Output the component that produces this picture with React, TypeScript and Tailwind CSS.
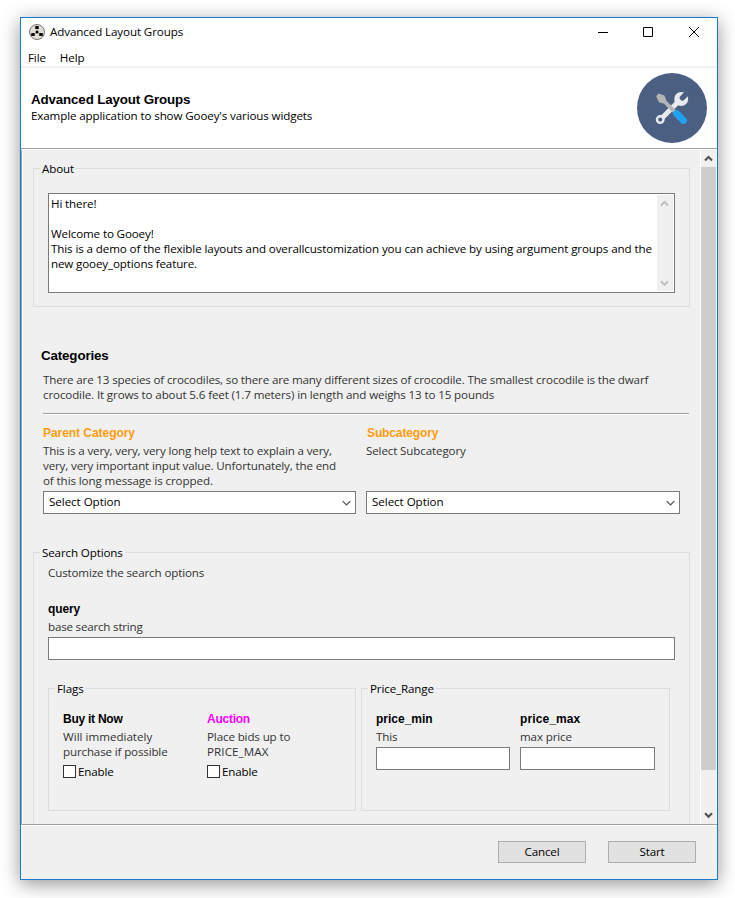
import type { ReactNode } from "react";

const ui = "font-['Open_Sans','Noto_Sans',sans-serif] text-[11.6px] leading-[15px] whitespace-nowrap tracking-[-0.13px]";
const heading = "font-['Liberation_Sans',Arial,sans-serif] font-bold text-[13.33px] tracking-[-0.13px] text-black";

function Line({ children, track = "", className = "" }: { children?: ReactNode; track?: string; className?: string }) {
  return (
    <div className={`h-[15px] ${className}`}>
      <span className={track}>{children}</span>
    </div>
  );
}

function Label({ children, className = "text-black", track = "tracking-[-0.12px]" }: { children: ReactNode; className?: string; track?: string }) {
  return (
    <div className={`mb-[2px] h-[16px] pt-px font-['Liberation_Sans',Arial,sans-serif] text-[12px] font-bold ${track} ${className}`}>
      {children}
    </div>
  );
}

function Group({ title, className, children }: { title: string; className: string; children: ReactNode }) {
  return (
    <section className={`flex flex-col border border-[#dcdcdc] ${className}`}>
      <div className="-mt-[8px] ml-[6px] h-[15px] self-start bg-[#f0f0f0] px-[2px] text-black">{title}</div>
      {children}
    </section>
  );
}

function ScrollArrow({ down = false, color }: { down?: boolean; color: string }) {
  return (
    <svg width="9" height="7" viewBox="0 0 9 7" fill="none" stroke={color} strokeWidth="2">
      <path d={down ? "M1 1.3 4.5 4.8 8 1.3" : "M1 5.5 4.5 2 8 5.5"} />
    </svg>
  );
}

function Combo({ className }: { className: string }) {
  return (
    <div className={`flex h-[23px] items-start justify-between border border-[#7a7a7a] bg-white pt-[2px] pr-[4px] pl-[5px] text-black ${className}`}>
      <span className="tracking-[-0.05px]">Select Option</span>
      <svg className="mt-[6px]" width="9" height="7" viewBox="0 0 9 7" fill="none" stroke="#505050" strokeWidth="1.2">
        <path d="M.7 1.2 4.5 5 8.3 1.2" />
      </svg>
    </div>
  );
}

function Check() {
  return (
    <div className="mt-[5px] flex h-[15px] text-black">
      <span className="mt-px h-[13px] w-[13px] border border-[#333] bg-white" />
      <span className="ml-[2px]">Enable</span>
    </div>
  );
}

function AppIcon() {
  return (
    <svg width="16" height="16" viewBox="0 0 16 16">
      <circle cx="8" cy="8" r="7.5" fill="#e0dfd6" stroke="#77756f" strokeWidth="1" />
      <path d="M8 8V4M8 8 4 10.400M8 8l4 2.400" stroke="#a5a49c" strokeWidth="1" />
      <circle cx="8" cy="8" r="1.500" fill="#000" />
      <rect x="6.200" y="2" width="3.600" height="3" rx=".4" fill="#0a0a0a" />
      <rect x="2.200" y="9" width="3.600" height="3" rx=".6" fill="#0a0a0a" />
      <rect x="10.200" y="9" width="3.600" height="3" rx=".6" fill="#0a0a0a" />
    </svg>
  );
}

function ToolsLogo() {
  return (
    <svg width="70" height="70" viewBox="0 0 70 70">
      <circle cx="35" cy="35" r="35" fill="#4b5f83" />
      <path d="M24.500 45.500 41 29" stroke="#e8eaec" strokeWidth="5" />
      <circle cx="23.200" cy="46.600" r="3.300" fill="#4b5f83" stroke="#e8eaec" strokeWidth="2.400" />
      <circle cx="44.200" cy="26" r="7" fill="#e8eaec" />
      <path d="M45.400 24.800 52 18.200" stroke="#4b5f83" strokeWidth="5.400" strokeLinecap="round" />
      <path d="M19.200 23.200 21.500 20.500 27.500 22.500 29.600 28 39.300 37.400 36.500 40.200 27 30.800 21.800 29.200Z" fill="#b5b5b5" />
      <path d="m39.500 40.500 7 7" stroke="#21a1f1" strokeWidth="6.800" strokeLinecap="round" />
      <path d="M36.200 39.700 39.200 36.800 44 40.500 40 44.600Z" fill="#21a1f1" />
    </svg>
  );
}

export default function App() {
  return (
    <div className={`h-[898px] w-[735px] overflow-hidden bg-white pt-[17px] pl-[20px] text-black ${ui}`}>
      <div className="flex h-[863px] w-[698px] flex-col border border-[#1979ca] bg-[#f0f0f0] shadow-[0_4px_18px_rgba(0,0,0,0.42)]">
        <header className="flex h-[29px] shrink-0 items-start bg-white pl-[8px]">
          <div className="mt-[6px]"><AppIcon /></div>
          <span className="mt-[6px] ml-[5px] tracking-[-0.1px]">Advanced Layout Groups</span>
          <svg className="mt-[8px] mr-[16px] ml-auto" width="103" height="12" viewBox="0 0 103 12" fill="none" stroke="#000">
            <path d="M0 6.500h10M45.500 1.500h9v9h-9ZM91 1l10 10M101 1 91 11" />
          </svg>
        </header>
        <nav className="flex h-[19px] shrink-0 gap-[14px] bg-white pt-[3px] pl-[7px]">
          <span>File</span>
          <span>Help</span>
        </nav>
        <div className="flex h-[82px] shrink-0 justify-between border-t-2 border-[#f0f0f0] bg-white pr-[10px] pl-[10px]">
          <div className="pt-[24px]">
            <Line className={heading}>Advanced Layout Groups</Line>
            <Line className="mt-px" track="tracking-[-0.12px]">Example application to show Gooey's various widgets</Line>
          </div>
          <div className="pt-[5px]"><ToolsLogo /></div>
        </div>
        <div className="h-[2px] shrink-0 border-t border-[#a0a0a0] bg-white" />

        <div className="flex h-[674px] shrink-0 overflow-hidden border-l border-[#a0a0a0]">
          <main className="h-[674px] w-[679px] shrink-0 overflow-hidden border-x border-white pt-[18px] pl-[10px] text-[#333]">
            <Group title="About" className="h-[139px] w-[657px]">
              <div className="mt-[17px] ml-[14px] flex h-[100px] w-[627px] justify-between border border-[#7a7a7a] bg-white text-black">
                <div className="w-[606px] pt-[2px] pl-[2px]">
                  <Line>Hi there!</Line>
                  <Line />
                  <Line>Welcome to Gooey!</Line>
                  <Line track="tracking-[-0.105px]">This is a demo of the flexible layouts and overallcustomization you can achieve by using argument groups and the</Line>
                  <Line>new gooey_options feature.</Line>
                </div>
                <div className="mt-px mr-px flex h-[96px] w-[16px] shrink-0 flex-col items-start justify-between bg-[#f0f0f0] pt-[5px] pb-[4px] pl-[3px]">
                  <ScrollArrow color="#bfbfbf" />
                  <ScrollArrow down color="#bfbfbf" />
                </div>
              </div>
            </Group>

            <section className="mt-[41px] ml-[8px]">
              <Line className={heading}>Categories</Line>
              <div className="mt-[9px] ml-[2px]">
                <Line track="tracking-[-0.16px]">There are 13 species of crocodiles, so there are many different sizes of crocodile. The smallest crocodile is the dwarf</Line>
                <Line>crocodile. It grows to about 5.6 feet (1.7 meters) in length and weighs 13 to 15 pounds</Line>
                <div className="mt-[11px] h-[2px] w-[646px] border-t border-[#a0a0a0] bg-white" />
                <div className="mt-[10px] flex">
                  <div className="w-[323px]">
                    <Label className="text-[#ff9c0f]" track="tracking-[-0.05px]">Parent Category</Label>
                    <div className="h-[48px]">
                      <Line track="tracking-[-0.15px]">This is a very, very, very long help text to explain a very,</Line>
                      <Line track="tracking-[-0.145px]">very, very important input value. Unfortunately, the end</Line>
                      <Line track="tracking-[-0.1px]">of this long message is cropped.</Line>
                    </div>
                    <Combo className="w-[313px]" />
                  </div>
                  <div>
                    <Label className="pl-px text-[#ff9c0f]">Subcategory</Label>
                    <div className="h-[48px]"><Line>Select Subcategory</Line></div>
                    <Combo className="w-[314px]" />
                  </div>
                </div>
              </div>
            </section>

            <Group title="Search Options" className="mt-[38px] h-[300px] w-[657px]">
              <div className="mt-[5px] ml-[14px]">
                <Line className="mb-[21px]" track="tracking-[-0.14px]">Customize the search options</Line>
                <Label>query</Label>
                <Line track="tracking-[-0.2px]">base search string</Line>
                <div className="mt-[3px] h-[23px] w-[627px] border border-[#7a7a7a] bg-white" />
                <div className="mt-[28px] flex gap-[5px]">
                  <Group title="Flags" className="h-[123px] w-[308px]">
                    <div className="mt-[15px] ml-[14px] flex">
                      <div className="w-[144px]">
                        <Label track="tracking-[-0.25px]">Buy it Now</Label>
                        <Line track="tracking-[0px]">Will immediately</Line>
                        <Line track="tracking-[-0.15px]">purchase if possible</Line>
                        <Check />
                      </div>
                      <div>
                        <Label className="text-[#ff00ff]" track="tracking-[-0.25px]">Auction</Label>
                        <Line>Place bids up to</Line>
                        <Line track="tracking-[0.1px]">PRICE_MAX</Line>
                        <Check />
                      </div>
                    </div>
                  </Group>
                  <Group title="Price_Range" className="h-[123px] w-[309px]">
                    <div className="mt-[15px] ml-[14px] flex">
                      <div className="w-[144px]">
                        <Label track="tracking-[0px]">price_min</Label>
                        <Line>This</Line>
                        <div className="mt-[3px] h-[23px] w-[134px] border border-[#7a7a7a] bg-white" />
                      </div>
                      <div>
                        <Label track="tracking-[0.1px]">price_max</Label>
                        <Line>max price</Line>
                        <div className="mt-[3px] h-[23px] w-[135px] border border-[#7a7a7a] bg-white" />
                      </div>
                    </div>
                  </Group>
                </div>
              </div>
            </Group>
          </main>
          <div className="flex w-[15px] flex-col items-center">
            <div className="flex h-[17px] items-center"><ScrollArrow color="#505050" /></div>
            <div className="h-[603px] w-[15px] bg-[#cdcdcd]" />
            <div className="mt-[42px]"><ScrollArrow down color="#505050" /></div>
          </div>
          <div className="w-px bg-white" />
        </div>

        <div className="h-[2px] shrink-0 border-t border-[#a0a0a0] bg-white" />
        <footer className="flex justify-end gap-[22px] pt-[15px] pr-[21px]">
          <div className="h-[22px] w-[88px] border border-[#adadad] bg-[#e1e1e1] pt-[2px] text-center">Cancel</div>
          <div className="h-[22px] w-[88px] border border-[#adadad] bg-[#e1e1e1] pt-[2px] text-center">Start</div>
        </footer>
      </div>
    </div>
  );
}
